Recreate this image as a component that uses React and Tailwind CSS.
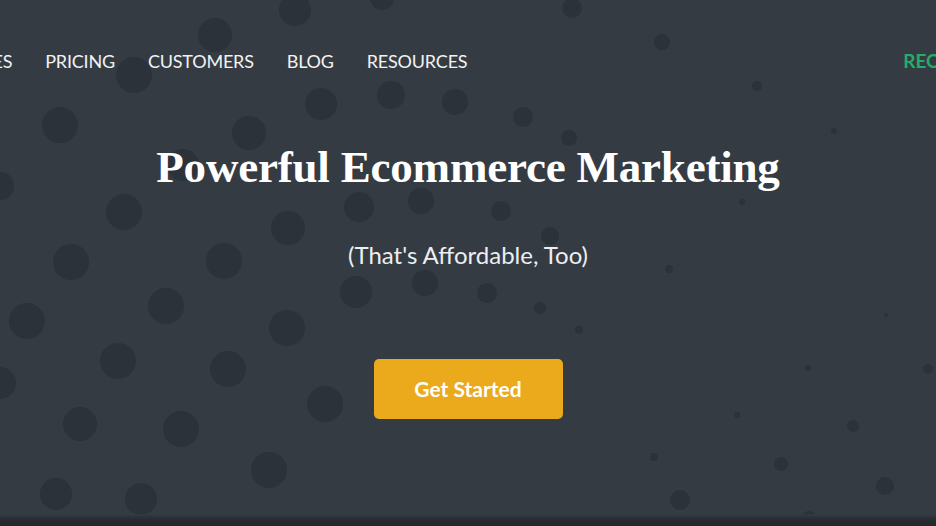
import React from 'react'

const DOTS = [
  [295, 10, 16], [215, 35, 17], [134, 75, 18], [60, 125, 18], [249, 133, 17],
  [321, 104, 16], [391, 95, 14], [455, 102, 13], [382, -2, 12], [0, 186, 14],
  [124, 212, 18], [183, 165, 16], [288, 228, 17], [359, 207, 15], [421, 201, 13],
  [572, 8, 10], [662, 42, 8], [757, 86, 5], [523, 117, 10], [569, 138, 8],
  [834, 131, 3], [742, 202, 3], [501, 211, 10], [550, 236, 9],
  [71, 262, 18], [224, 261, 18], [356, 292, 16], [425, 283, 13], [166, 306, 18],
  [27, 321, 18], [287, 328, 18], [118, 361, 18], [228, 369, 18], [0, 383, 16],
  [325, 404, 18], [80, 424, 17], [181, 429, 18], [269, 470, 18], [56, 494, 16],
  [141, 499, 16],
  [669, 269, 4], [487, 293, 10], [540, 308, 6], [579, 330, 4], [886, 315, 2],
  [808, 368, 3], [928, 369, 5], [737, 415, 3], [853, 426, 6], [654, 457, 4],
  [781, 464, 7], [885, 486, 9], [680, 500, 10], [809, 519, 8],
]

const NAV = ['FEATURES', 'PRICING', 'CUSTOMERS', 'BLOG', 'RESOURCES']

function Dots() {
  return (
    <svg className="absolute inset-0 w-full h-full" viewBox="0 0 936 526" preserveAspectRatio="none">
      {DOTS.map(([cx, cy, r], i) => (
        <circle key={i} cx={cx} cy={cy} r={r} fill="#2c3239" />
      ))}
    </svg>
  )
}

export default function App() {
  return (
    <div className="relative w-[936px] h-[526px] overflow-hidden bg-[#353b43]">
      <Dots />
      <div className="absolute left-0 right-0 bottom-0 h-[12px] bg-gradient-to-b from-[#353b43] via-[#262a30] to-[#24282d]" />
      <div className="relative flex flex-col h-full">
        <header className="flex items-center justify-between pt-[51px] font-['Lato',sans-serif] text-[18px] leading-none">
          <nav className="flex gap-[33px] text-[#f2f2f2] ml-[-73px]">
            {NAV.map((item) => (
              <a key={item} className="whitespace-nowrap tracking-[-0.2px]">{item}</a>
            ))}
          </nav>
          <a className="whitespace-nowrap text-[#23ad69] font-bold text-[19px] mr-[-115px]">REQUEST DEMO</a>
        </header>
        <main className="flex flex-col items-center">
          <h1 className="mt-[75px] font-['Liberation_Serif',serif] font-bold text-[45px] leading-none text-white tracking-[-0.2px]">
            Powerful Ecommerce Marketing
          </h1>
          <p className="mt-[53px] font-['Lato',sans-serif] text-[24px] leading-none text-[#eceef0]">
            (That's Affordable, Too)
          </p>
          <button className="mt-[92px] w-[189px] h-[60px] rounded-[5px] bg-[#eaaa1b] text-white font-['Lato',sans-serif] font-bold text-[21px]">
            Get Started
          </button>
        </main>
      </div>
    </div>
  )
}
